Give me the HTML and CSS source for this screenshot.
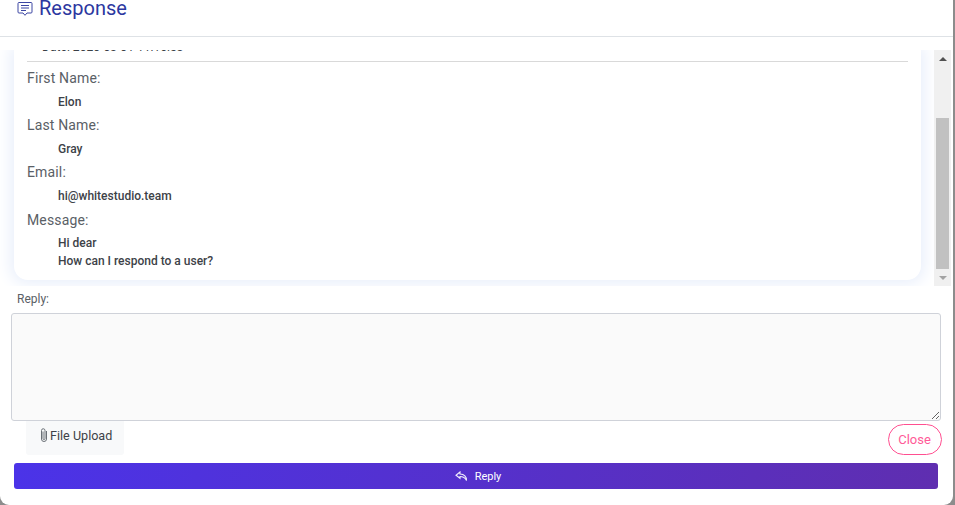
FILE: index.html
```html
<!DOCTYPE html>
<html lang="en">
<head>
<meta charset="utf-8">
<title>Response</title>
<link rel="stylesheet" href="styles.css">
</head>
<body>
<main class="modal">
  <header class="modal-head">
    <svg class="head-icon" width="16" height="16" viewBox="0 0 16 16" fill="none" stroke="#3d47a3" stroke-width="1" aria-hidden="true">
      <path d="M2 1.500h12a1 1 0 0 1 1 1v8.500a1 1 0 0 1-1 1h-4l-2 2.300-2-2.300h-4a1 1 0 0 1-1-1v-8.500a1 1 0 0 1 1-1z"/>
      <path d="M4 4.500h8M4 7h8M4 9.500h5"/>
    </svg>
    <h1 class="head-title">Response</h1>
  </header>
  <section class="scroll-area">
    <div class="scroll-content">
      <div class="card">
        <div class="date-line">Date: 2020-03-01 11:16:53</div>
        <hr class="rule">
        <div class="label">First Name:</div>
        <div class="value">Elon</div>
        <div class="label">Last Name:</div>
        <div class="value">Gray</div>
        <div class="label">Email:</div>
        <div class="value">hi@whitestudio.team</div>
        <div class="label">Message:</div>
        <div class="value">Hi dear</div>
        <div class="value">How can I respond to a user?</div>
      </div>
    </div>
    <div class="scrollbar">
      <div class="arrow arrow-up"></div>
      <div class="track"><div class="thumb"></div></div>
      <div class="arrow arrow-down"></div>
    </div>
  </section>
  <div class="reply-label">Reply:</div>
  <textarea class="reply-box" aria-label="Reply"></textarea>
  <div class="actions">
    <button class="upload" type="button">
      <svg width="8" height="14" viewBox="0 0 8 14" fill="none" stroke="#6b7077" stroke-width="1" aria-hidden="true">
        <path d="M3 3.500v7a1 1 0 0 0 2 0v-8a1.500 1.500 0 0 0-3.500 0v8.500a2.500 2.500 0 0 0 5 0v-8"/>
      </svg>
      File Upload
    </button>
    <button class="close" type="button">Close</button>
  </div>
  <button class="send" type="button">
    <svg width="13" height="11" viewBox="0 0 13 11" fill="none" stroke="#f1eefc" stroke-width="1.100" aria-hidden="true">
      <path d="M5 1 1 4.300l4 3V5.500c3 0 5 1 6.500 4 0-4-2.500-6.300-6.500-6.500z"/>
    </svg>
    Reply
  </button>
</main>
</body>
</html>
```
FILE: styles.css
```css
* { box-sizing: border-box; }
html, body { margin: 0; height: 100%; }
body {
  background: #8c8c8c;
  font-family: Roboto, "Liberation Sans", sans-serif;
  overflow: hidden;
}
.modal {
  width: 953px;
  height: 505px;
  background: #fff;
  border-radius: 0 0 9px 9px;
  display: flex;
  flex-direction: column;
}
.modal-head {
  height: 37px;
  flex: none;
  border-bottom: 1px solid #dee2e6;
  display: flex;
  align-items: flex-start;
  gap: 6px;
  padding-left: 17px;
  overflow: hidden;
}
.head-icon { margin-top: 1px; flex: none; }
.head-title {
  margin: -4px 0 0;
  font-size: 20px;
  line-height: 24px;
  font-weight: 400;
  color: #2c37a0;
}
.scroll-area {
  margin-top: 13px;
  height: 236px;
  width: 951px;
  flex: none;
  display: flex;
}
.scroll-content {
  flex: 1;
  min-width: 0;
  height: 236px;
  overflow: hidden;
  padding: 0 13px 6px 14px;
  background: #fff;
}
.card {
  height: 230px;
  background: #fff;
  border-radius: 0 0 14px 14px;
  padding: 0 13px;
  box-shadow: 0 0 16px 4px #e9effb;
  overflow: hidden;
}
.date-line {
  margin: -10px 0 0 15px;
  height: 15px;
  font-size: 12px;
  line-height: 15px;
  font-weight: 400;
  letter-spacing: 0.05px;
  color: #3a3f45;
}
.rule {
  margin: 6px 0 7px;
  border: 0;
  border-top: 1px solid #d9d9d9;
}
.label {
  font-size: 14px;
  line-height: 18px;
  letter-spacing: 0.15px;
  color: #5a6066;
}
.value {
  font-size: 12px;
  line-height: 18px;
  font-weight: 500;
  color: #3d4248;
  padding-left: 31px;
}
.value + .label { margin-top: 5.5px; }
.label + .value { margin-top: 5.7px; }
.scrollbar {
  width: 17px;
  flex: none;
  display: flex;
  flex-direction: column;
  background: #f0f0f0;
}
.arrow { height: 17px; flex: none; display: flex; align-items: center; justify-content: center; }
.arrow::before { content: ""; border-left: 4px solid transparent; border-right: 4px solid transparent; }
.arrow-up::before { border-bottom: 4px solid #505050; }
.arrow-down::before { border-top: 4px solid #a3a3a3; }
.track { flex: 1; display: flex; flex-direction: column; justify-content: flex-end; padding: 0 2px; }
.thumb { height: 151px; background: #c1c1c1; }
.reply-label {
  margin: 6px 0 0 17px;
  font-size: 12px;
  line-height: 15px;
  color: #5a6066;
}
.reply-box {
  display: block;
  margin: 6px 0 0 11px;
  width: 930px;
  height: 108px;
  flex: none;
  background: #fafafa;
  border: 1px solid #cfd2d9;
  border-radius: 3px;
  outline: none;
  resize: both;
}
.actions {
  display: flex;
  justify-content: space-between;
  align-items: flex-start;
  padding: 0 11px 0 26px;
  height: 42px;
  flex: none;
}
.upload {
  width: 98px;
  height: 34px;
  border: 0;
  border-radius: 0 0 3px 3px;
  background: #f8f9fa;
  font: 400 12.6px Roboto, sans-serif;
  color: #3d4248;
  display: flex;
  align-items: center;
  gap: 2px;
  padding: 0 0 6px 14px;
}
.close {
  margin-top: 3px;
  width: 54px;
  height: 31px;
  border: 1px solid #ff4f90;
  border-radius: 16px;
  background: #fff;
  color: #ff5a98;
  font: 400 13px Roboto, sans-serif;
  padding: 0 1px 0 0;
}
.send {
  margin-left: 14px;
  width: 924px;
  height: 26px;
  flex: none;
  border: 0;
  border-radius: 3px;
  background: linear-gradient(90deg, #4b33e8, #5f2eb0);
  color: #fff;
  font: 400 11px Roboto, sans-serif;
  display: flex;
  align-items: center;
  justify-content: center;
  gap: 7px;
  padding: 0 0 0 4px;
}
```
